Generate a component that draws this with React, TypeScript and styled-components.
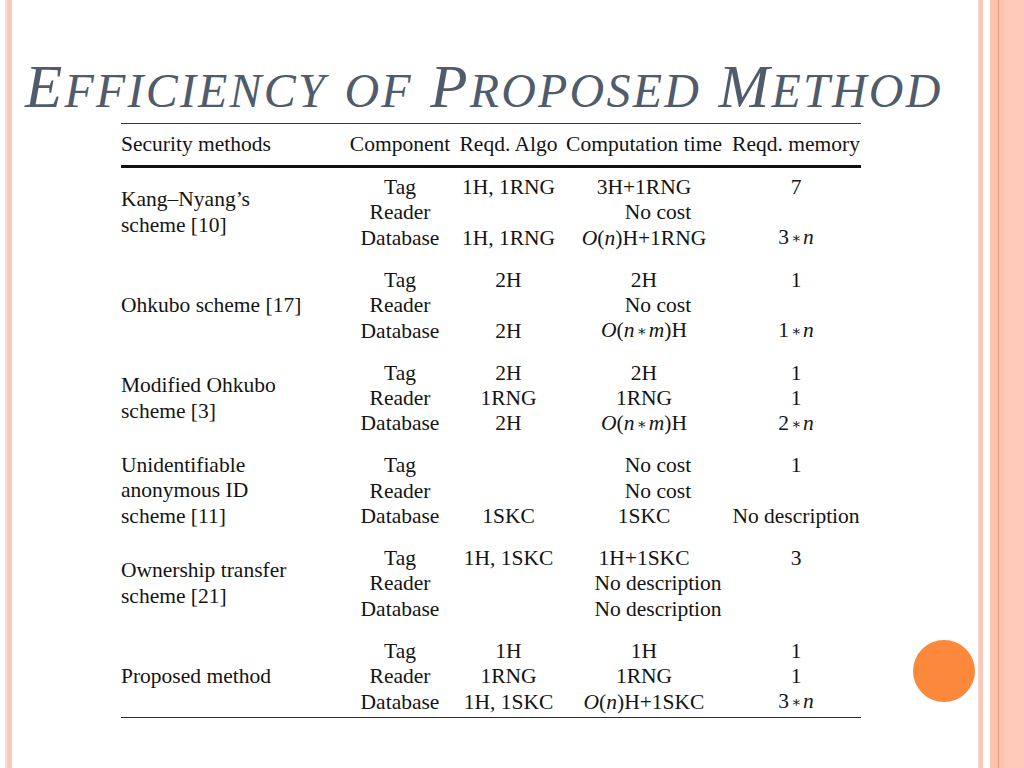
import React from "react";
import styled, { createGlobalStyle } from "styled-components";

const Global = createGlobalStyle`
  html, body { margin: 0; padding: 0; background: #ffffff; }
  #root { width: 1024px; height: 768px; }
`;

const Slide = styled.div`
  position: relative;
  width: 1024px;
  height: 768px;
  display: flex;
  background: #ffffff;
  overflow: hidden;
`;

const LeftEdge = styled.div`
  flex: 0 0 14px;
  display: flex;
  padding-left: 5px;
  box-sizing: border-box;
`;

const LeftStripe = styled.div`
  width: 7px;
  background: #fbc9b8;
  border-left: 2px solid #f8ddd2;
  box-sizing: border-box;
`;

const RightEdge = styled.div`
  flex: 0 0 46px;
  display: flex;
`;

const ThinStripe = styled.div`
  width: 5px;
  background: #fbc8b7;
  border-left: 1px solid #fadacf;
  box-sizing: border-box;
`;

const WhiteGap = styled.div`
  width: 7px;
  background: #ffffff;
`;

const Band = styled.div`
  flex: 1;
  display: flex;
`;

const BandInner = styled.div`
  width: 8px;
  background: #fcc4ae;
  border-right: 1px solid #e39a7c;
`;

const BandMid = styled.div`
  width: 5px;
  background: #fcc4ae;
`;

const BandOuter = styled.div`
  flex: 1;
  background: #fdcbb8;
`;

const Main = styled.div`
  flex: 1;
  display: flex;
  flex-direction: column;
  padding-top: 55px;
  padding-left: 11px;
`;

const Title = styled.h1`
  margin: 0;
  height: 64px;
  font-family: "Liberation Serif", "Times New Roman", serif;
  font-style: italic;
  font-weight: normal;
  font-size: 61px;
  line-height: 64px;
  color: #505b6b;
  letter-spacing: 2.2px;
  white-space: nowrap;
`;

const Cap = styled.span`
  font-size: 61px;
`;

const Small = styled.span`
  font-size: 48px;
  text-transform: uppercase;
`;

const Table = styled.div`
  margin-top: 4px;
  margin-left: 96px;
  width: 740px;
  border-top: 1.5px solid #3a3a3a;
  border-bottom: 1.5px solid #2a2a2a;
  font-family: "Liberation Serif", "Times New Roman", serif;
  font-size: 21.5px;
  color: #141414;
`;

const cols = "224px 110px 107px 169px 130px";

const HeaderRow = styled.div`
  display: grid;
  grid-template-columns: ${cols};
  height: 41px;
  align-items: center;
  border-bottom: 3px solid #111111;
  white-space: nowrap;
`;

const Body = styled.div`
  display: flex;
  flex-direction: column;
  gap: 16.6px;
  padding-top: 7px;
  padding-bottom: 2px;
`;

const Group = styled.div`
  display: grid;
  grid-template-columns: ${cols};
  grid-auto-rows: 25.4px;
  align-items: center;
  white-space: nowrap;
`;

const MethodCell = styled.div`
  grid-row: span 3;
  align-self: center;
  text-align: left;
  line-height: 25.8px;
  white-space: normal;
`;

const HeadCell = styled.div<{ $align?: string; $padRight?: number }>`
  text-align: ${(p) => p.$align || "center"};
  padding-right: ${(p) => p.$padRight || 0}px;
`;

const Cell = styled.div<{ $padLeft?: number; $padRight?: number }>`
  text-align: center;
  line-height: 25.4px;
  padding-left: ${(p) => p.$padLeft || 0}px;
  padding-right: ${(p) => p.$padRight || 0}px;
`;

const Var = styled.i`
  font-style: italic;
`;

const Star = styled.span`
  font-family: "DejaVu Serif", serif;
  font-size: 15px;
  margin: 0 2px;
  vertical-align: 1px;
`;

const Circle = styled.div`
  position: absolute;
  left: 913px;
  top: 640px;
  width: 62px;
  height: 62px;
  border-radius: 50%;
  background: #fc883b;
`;

type Row = [React.ReactNode, React.ReactNode, React.ReactNode, React.ReactNode];

const NO_COST = "No cost";
const NO_DESC = "No description";

const On = () => (
  <>
    <Var>O</Var>(<Var>n</Var>)
  </>
);
const Onm = () => (
  <>
    <Var>O</Var>(<Var>n</Var>
    <Star>∗</Star>
    <Var>m</Var>)
  </>
);
const Mul = ({ k }: { k: string }) => (
  <>
    {k}
    <Star>∗</Star>
    <Var>n</Var>
  </>
);

const groups: { method: React.ReactNode; rows: Row[] }[] = [
  {
    method: (
      <>
        Kang–Nyang’s
        <br />
        scheme [10]
      </>
    ),
    rows: [
      ["Tag", "1H, 1RNG", "3H+1RNG", "7"],
      ["Reader", "", NO_COST, ""],
      ["Database", "1H, 1RNG", <><On />H+1RNG</>, <Mul k="3" />],
    ],
  },
  {
    method: <>Ohkubo scheme [17]</>,
    rows: [
      ["Tag", "2H", "2H", "1"],
      ["Reader", "", NO_COST, ""],
      ["Database", "2H", <><Onm />H</>, <Mul k="1" />],
    ],
  },
  {
    method: (
      <>
        Modified Ohkubo
        <br />
        scheme [3]
      </>
    ),
    rows: [
      ["Tag", "2H", "2H", "1"],
      ["Reader", "1RNG", "1RNG", "1"],
      ["Database", "2H", <><Onm />H</>, <Mul k="2" />],
    ],
  },
  {
    method: (
      <>
        Unidentifiable
        <br />
        anonymous ID
        <br />
        scheme [11]
      </>
    ),
    rows: [
      ["Tag", "", NO_COST, "1"],
      ["Reader", "", NO_COST, ""],
      ["Database", "1SKC", "1SKC", NO_DESC],
    ],
  },
  {
    method: (
      <>
        Ownership transfer
        <br />
        scheme [21]
      </>
    ),
    rows: [
      ["Tag", "1H, 1SKC", "1H+1SKC", "3"],
      ["Reader", "", NO_DESC, ""],
      ["Database", "", NO_DESC, ""],
    ],
  },
  {
    method: <>Proposed method</>,
    rows: [
      ["Tag", "1H", "1H", "1"],
      ["Reader", "1RNG", "1RNG", "1"],
      ["Database", "1H, 1SKC", <><On />H+1SKC</>, <Mul k="3" />],
    ],
  },
];

export default function App() {
  return (
    <>
      <Global />
      <Slide>
        <LeftEdge>
          <LeftStripe />
        </LeftEdge>
        <Main>
          <Title>
            <Cap>E</Cap>
            <Small>fficiency</Small> <Small>of</Small> <Cap>P</Cap>
            <Small>roposed</Small> <Cap>M</Cap>
            <Small>ethod</Small>
          </Title>
          <Table>
            <HeaderRow>
              <HeadCell $align="left">Security methods</HeadCell>
              <HeadCell>Component</HeadCell>
              <HeadCell>Reqd. Algo</HeadCell>
              <HeadCell $padRight={5}>Computation time</HeadCell>
              <HeadCell>Reqd. memory</HeadCell>
            </HeaderRow>
            <Body>
              {groups.map((g, gi) => (
                <Group key={gi}>
                  <MethodCell>{g.method}</MethodCell>
                  {g.rows.map((r, ri) => (
                    <React.Fragment key={ri}>
                      <Cell>{r[0]}</Cell>
                      <Cell>{r[1]}</Cell>
                      <Cell
                        $padLeft={r[2] === NO_COST || r[2] === NO_DESC ? 23 : 0}
                        $padRight={r[2] === NO_COST || r[2] === NO_DESC ? 0 : 5}
                      >
                        {r[2]}
                      </Cell>
                      <Cell>{r[3]}</Cell>
                    </React.Fragment>
                  ))}
                </Group>
              ))}
            </Body>
          </Table>
        </Main>
        <RightEdge>
          <ThinStripe />
          <WhiteGap />
          <Band>
            <BandInner />
            <BandMid />
            <BandOuter />
          </Band>
        </RightEdge>
        <Circle />
      </Slide>
    </>
  );
}
